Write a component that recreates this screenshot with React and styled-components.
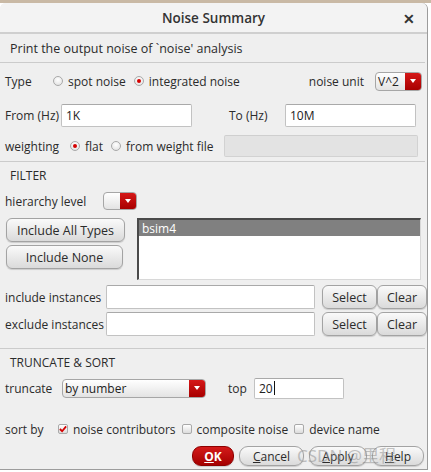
import React from 'react';
import styled, { createGlobalStyle, css } from 'styled-components';

const GlobalStyle = createGlobalStyle`
  html, body { margin: 0; padding: 0; background: #ffffff; }
  body { font-family: "Open Sans", "Noto Sans", sans-serif; font-size: 12px; color: #2b2b2b; }
  * { box-sizing: border-box; }
`;

const Desktop = styled.div`
  width: 431px;
  height: 472px;
  overflow: hidden;
  padding-top: 3px;
  background: linear-gradient(#c9b9a5 0 3px, #ffffff 3px);
`;

const Window = styled.div`
  position: relative;
  width: 428px;
  height: 467px;
  background: #efefef;
  border-right: 1px solid #9c9c9c;
  border-bottom: 1px solid #9c9c9c;
  border-radius: 6px 6px 0 0;
`;

const TitleBar = styled.div`
  height: 31px;
  display: flex;
  align-items: center;
  justify-content: center;
  position: relative;
  background: #f3f3f3;
  border-bottom: 2px solid #cfcfcf;
  border-radius: 6px 6px 0 0;
  font-weight: 600;
  font-size: 13.5px;
  color: #333;
`;

const Close = styled.span`
  position: absolute;
  right: 12px;
  top: 6px;
  font-size: 14px;
  font-weight: bold;
  color: #333;
`;

const Header = styled.div`
  height: 29px;
  display: flex;
  align-items: center;
  padding-left: 10px;
  border-bottom: 1px solid #cbcbcb;
  margin-right: 2px;
  font-size: 12.5px;
`;

const Section = styled.div`
  display: flex;
  flex-direction: column;
  padding-top: ${p => p.$top || 0}px;
  padding-bottom: ${p => p.$bottom || 0}px;
  border-bottom: ${p => (p.$line ? '1px solid #cbcbcb' : 'none')};
  margin-right: 2px;
`;

const Row = styled.div`
  display: flex;
  align-items: center;
  height: ${p => p.$h || 26}px;
  margin-top: ${p => p.$mt || 0}px;
  padding-left: ${p => (p.$pl === undefined ? 5 : p.$pl)}px;
`;

const Label = styled.span`
  width: ${p => (p.$w ? `${p.$w}px` : 'auto')};
  flex: none;
  white-space: nowrap;
`;

const Heading = styled.div`
  height: ${p => p.$h || 26}px;
  display: flex;
  align-items: center;
  padding-left: 10px;
`;

const Spacer = styled.span`
  width: ${p => p.$w}px;
  flex: none;
`;

const Grow = styled.span`
  flex: 1;
`;

const Option = styled.span`
  display: inline-flex;
  align-items: center;
  gap: 5px;
  margin-right: ${p => p.$mr || 0}px;
  white-space: nowrap;
`;

const Radio = styled.span`
  width: 10px;
  height: 10px;
  border-radius: 50%;
  border: 1px solid #a9a9a9;
  background: radial-gradient(circle at 50% 35%, #ffffff, #dedede);
  display: inline-flex;
  align-items: center;
  justify-content: center;
  &::after {
    content: '';
    width: 4px;
    height: 4px;
    border-radius: 50%;
    background: ${p => (p.$on ? '#d40000' : 'transparent')};
  }
`;

const Check = styled.span`
  width: 10px;
  height: 10px;
  border: 1px solid #a9a9a9;
  border-radius: 2px;
  background: linear-gradient(#ffffff, #dcdcdc);
  display: inline-flex;
  align-items: center;
  justify-content: center;
`;

const Input = styled.div`
  width: ${p => p.$w}px;
  height: ${p => p.$h || 23}px;
  flex: none;
  display: flex;
  align-items: center;
  padding-left: 4px;
  border: 1px solid ${p => (p.$disabled ? '#d2d2d2' : '#c2c2c2')};
  border-top-color: ${p => (p.$disabled ? '#cfcfcf' : '#a9a9a9')};
  border-radius: 2px;
  background: ${p => (p.$disabled ? '#e3e3e3' : '#ffffff')};
  color: #222;
`;

const Caret = styled.span`
  width: 1px;
  height: 14px;
  background: #111;
  margin-left: 1px;
`;

const Combo = styled.div`
  width: ${p => p.$w}px;
  height: ${p => p.$h || 19}px;
  flex: none;
  display: flex;
  border: 1px solid #a6a6a6;
  border-radius: 4px;
  overflow: hidden;
  background: linear-gradient(#ffffff, #e3e3e3);
`;

const ComboText = styled.span`
  flex: 1;
  display: flex;
  align-items: center;
  padding-left: 2px;
  color: #222;
`;

const ComboArrow = styled.span`
  width: 16px;
  flex: none;
  display: flex;
  align-items: center;
  justify-content: center;
  background: linear-gradient(#d51818, #a80000);
  &::after {
    content: '';
    border-left: 3px solid transparent;
    border-right: 3px solid transparent;
    border-top: 4px solid #ffffff;
  }
`;

const buttonLook = css`
  display: flex;
  align-items: center;
  justify-content: center;
  border: 1px solid #a3a3a3;
  background: linear-gradient(#fafafa, #dadada);
  color: #2b2b2b;
  font-family: inherit;
  font-size: 12px;
  padding: 0;
  box-shadow: 0 1px 1px rgba(0, 0, 0, 0.15);
`;

const Button = styled.button`
  ${buttonLook};
  width: ${p => p.$w}px;
  height: ${p => p.$h || 24}px;
  border-radius: 6px;
  flex: none;
  font-size: 12.5px;
`;

const DialogButton = styled.button`
  ${buttonLook};
  width: ${p => p.$w}px;
  height: 20px;
  border-radius: 9px;
  flex: none;
  ${p =>
    p.$primary &&
    css`
      background: linear-gradient(#d41a1a, #a50000);
      border-color: #8e0000;
      color: #ffffff;
      font-weight: bold;
    `}
`;

const Ul = styled.span`
  text-decoration: underline;
`;

const TypesArea = styled.div`
  display: flex;
  margin-top: 5px;
  padding-left: 6px;
  height: 63px;
`;

const ButtonColumn = styled.div`
  display: flex;
  flex-direction: column;
  gap: 3px;
  width: 131px;
  flex: none;
`;

const ListBox = styled.div`
  width: 284px;
  height: 62px;
  background: #ffffff;
  border-top: 2px solid #4a4a4a;
  border-left: 2px solid #4a4a4a;
  border-right: 1px solid #d8d8d8;
  border-bottom: 1px solid #d8d8d8;
`;

const ListItem = styled.div`
  height: 16px;
  display: flex;
  align-items: center;
  padding-left: 3px;
  background: ${p => (p.$selected ? '#808080' : 'transparent')};
  color: ${p => (p.$selected ? '#ffffff' : '#222')};
`;

const PairButtons = styled.div`
  display: flex;
  margin-left: 7px;
`;

const Footer = styled.div`
  display: flex;
  justify-content: flex-end;
  gap: 5px;
  margin-top: 4px;
  padding-right: 1px;
`;

const Watermark = styled.span`
  position: absolute;
  left: 297px;
  top: 439px;
  font-family: "Noto Sans", "Noto Sans CJK SC", sans-serif;
  font-size: 17px;
  color: rgba(140, 140, 140, 0.5);
  pointer-events: none;
  white-space: nowrap;
`;

const CheckMark = () => (
  <svg width="9" height="8" viewBox="0 0 9 8">
    <path d="M1 4 L3.5 6.5 L8 1" fill="none" stroke="#d40000" strokeWidth="2" />
  </svg>
);

export default function App() {
  return (
    <>
      <GlobalStyle />
      <Desktop>
        <Window>
          <TitleBar>
            Noise Summary
            <Close>✕</Close>
          </TitleBar>
          <Header>Print the output noise of `noise' analysis</Header>

          <Section $top={3} $line>
            <Row $h={30}>
              <Label $w={48}>Type</Label>
              <Option $mr={8}>
                <Radio />
                spot noise
              </Option>
              <Option>
                <Radio $on />
                integrated noise
              </Option>
              <Grow />
              <Label>noise unit</Label>
              <Spacer $w={11} />
              <Combo $w={47}>
                <ComboText>V^2</ComboText>
                <ComboArrow />
              </Combo>
              <Spacer $w={3} />
            </Row>
            <Row $h={30} $mt={4}>
              <Label $w={56}>From (Hz)</Label>
              <Input $w={131}>1K</Input>
              <Spacer $w={37} />
              <Label $w={56}>To (Hz)</Label>
              <Input $w={131}>10M</Input>
            </Row>
            <Row $h={30} $mt={1}>
              <Label $w={65}>weighting</Label>
              <Option $mr={8}>
                <Radio $on />
                flat
              </Option>
              <Option>
                <Radio />
                from weight file
              </Option>
              <Spacer $w={10} />
              <Input $w={194} $h={22} $disabled />
            </Row>
          </Section>

          <Section $bottom={11} $line>
            <Heading $h={26}>FILTER</Heading>
            <Row $h={24} $mt={1}>
              <Label $w={98}>hierarchy level</Label>
              <Combo $w={34} $h={18}>
                <ComboText />
                <ComboArrow />
              </Combo>
            </Row>
            <TypesArea>
              <ButtonColumn>
                <Button $w={119}>Include All Types</Button>
                <Button $w={117}>Include None</Button>
              </ButtonColumn>
              <ListBox>
                <ListItem $selected>bsim4</ListItem>
              </ListBox>
            </TypesArea>
            <Row $h={26} $mt={3}>
              <Label $w={101}>include instances</Label>
              <Input $w={209} $h={24} />
              <PairButtons>
                <Button $w={55}>Select</Button>
                <Button $w={50}>Clear</Button>
              </PairButtons>
            </Row>
            <Row $h={26} $mt={1}>
              <Label $w={101}>exclude instances</Label>
              <Input $w={209} $h={24} />
              <PairButtons>
                <Button $w={55}>Select</Button>
                <Button $w={50}>Clear</Button>
              </PairButtons>
            </Row>
          </Section>

          <Section>
            <Heading $h={26}>TRUNCATE &amp; SORT</Heading>
            <Row $h={26}>
              <Label $w={57}>truncate</Label>
              <Combo $w={144}>
                <ComboText>by number</ComboText>
                <ComboArrow />
              </Combo>
              <Spacer $w={22} />
              <Label $w={26}>top</Label>
              <Input $w={90} $h={21}>
                20
                <Caret />
              </Input>
            </Row>
            <Row $h={26} $mt={15}>
              <Label $w={53}>sort by</Label>
              <Option $mr={6}>
                <Check $on>
                  <CheckMark />
                </Check>
                noise contributors
              </Option>
              <Option $mr={6}>
                <Check />
                composite noise
              </Option>
              <Option>
                <Check />
                device name
              </Option>
            </Row>
            <Footer>
              <DialogButton $w={42} $primary>
                <Ul>O</Ul>K
              </DialogButton>
              <DialogButton $w={65}>
                <Ul>C</Ul>ancel
              </DialogButton>
              <DialogButton $w={58}>
                <Ul>A</Ul>pply
              </DialogButton>
              <DialogButton $w={52}>
                <Ul>H</Ul>elp
              </DialogButton>
            </Footer>
          </Section>
          <Watermark>CSDN @里程</Watermark>
        </Window>
      </Desktop>
    </>
  );
}
